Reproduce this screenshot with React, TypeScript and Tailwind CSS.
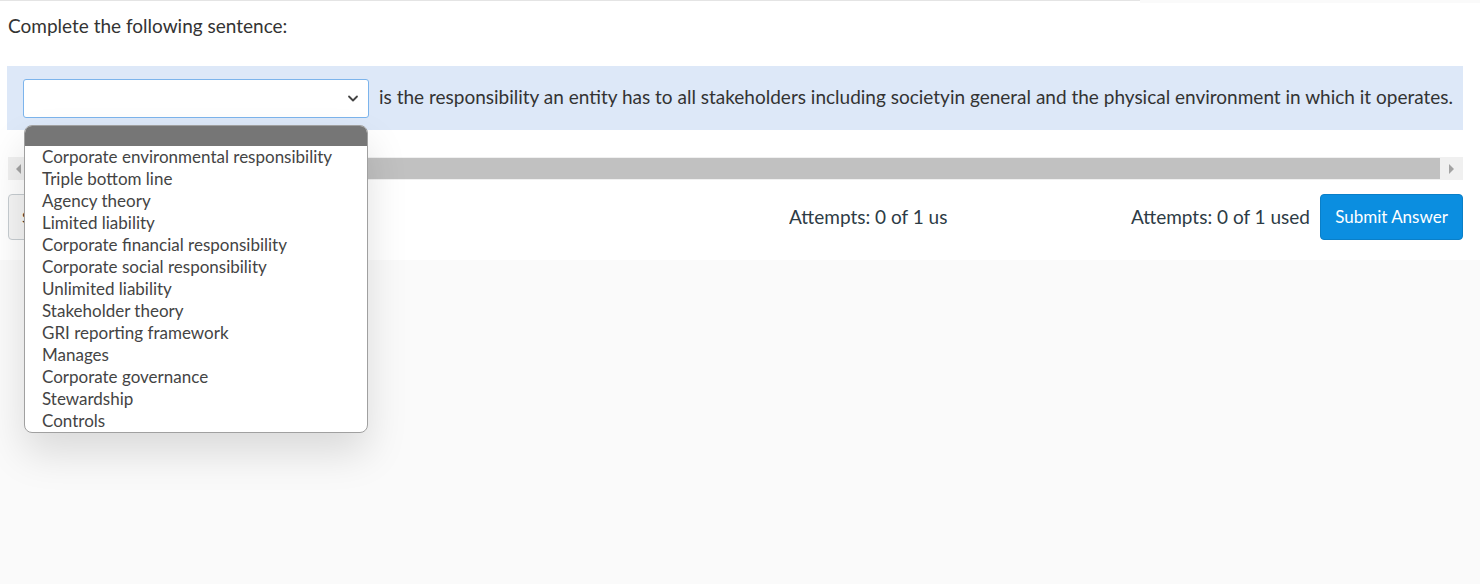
import React from 'react';

const options = [
  'Corporate environmental responsibility',
  'Triple bottom line',
  'Agency theory',
  'Limited liability',
  'Corporate financial responsibility',
  'Corporate social responsibility',
  'Unlimited liability',
  'Stakeholder theory',
  'GRI reporting framework',
  'Manages',
  'Corporate governance',
  'Stewardship',
  'Controls',
];

function Chevron() {
  return (
    <svg width="14" height="14" viewBox="0 0 14 14" fill="none" className="text-[#444]">
      <path d="M3 5.5 7 9.5l4-4" stroke="currentColor" strokeWidth="1.8" strokeLinecap="round" strokeLinejoin="round" />
    </svg>
  );
}

export default function App() {
  return (
    <div className="min-h-[584px] w-full bg-[#fafafa] font-['Lato','Open_Sans',sans-serif] text-[#333]">
      <div className="flex">
        <div className="h-[3px] w-[1140px] border-t border-[#e4e4e4] bg-white" />
        <div className="h-[3px] flex-1 bg-[#fafafa]" />
      </div>
      <div className="bg-white pb-5">
        <div className="px-2 pt-[10px] text-[19px] leading-[26px]">Complete the following sentence:</div>

        <div className="mx-[7px] mt-[27px] mr-[17px] flex h-[64px] items-center bg-[#dde8f8] pl-4">
          <div className="relative">
            <div className="flex h-[39px] w-[346px] items-center justify-end rounded-[3px] border border-[#7cb4ec] bg-white pr-[8px]">
              <Chevron />
            </div>
            <div className="absolute left-[1px] top-[46px] z-10 w-[344px] overflow-hidden rounded-[8px] border border-[#a0a0a0] bg-white shadow-[0_20px_40px_rgba(0,0,0,0.13)]">
              <div className="h-[20px] bg-[#767676]" />
              {options.map((o) => (
                <div key={o} className="h-[22px] pl-[17px] text-[17px] leading-[22px] text-[#444]">
                  {o}
                </div>
              ))}
            </div>
          </div>
          <div className="ml-[10px] whitespace-nowrap pb-[3px] text-[19px] leading-[24px] text-[#333]">
            is the responsibility an entity has to all stakeholders including societyin general and the physical environment in which it operates.
          </div>
        </div>

        <div className="mx-2 mr-[17px] mt-[27px] flex h-[23px] bg-[#f0f0f0]">
          <div className="flex w-[20px] items-center justify-center">
            <div className="h-0 w-0 border-y-[5px] border-r-[5px] border-y-transparent border-r-[#a3a3a3]" />
          </div>
          <div className="my-[1px] flex-1 bg-[#c1c1c1]" />
          <div className="flex w-[23px] items-center justify-center">
            <div className="h-0 w-0 border-y-[5px] border-l-[5px] border-y-transparent border-l-[#a3a3a3]" />
          </div>
        </div>

        <div className="mx-2 mr-[17px] mt-[14px] flex h-[46px] items-center">
          <div className="flex h-[46px] w-[80px] items-center rounded-[4px] border border-[#c7cdd1] bg-[#f5f5f5] pl-[13px] text-[16px]">Save</div>
          <div className="ml-[701px] w-[165px] overflow-hidden whitespace-nowrap text-[19px] text-[#2d3b45]">Attempts: 0 of 1 us</div>
          <div className="ml-auto whitespace-nowrap text-[19px] text-[#2d3b45]">Attempts: 0 of 1 used</div>
          <button className="ml-[10px] h-[46px] w-[143px] rounded-[4px] border border-[#0a7fc8] bg-[#0b8ee0] text-[17px] text-white">Submit Answer</button>
        </div>
      </div>
    </div>
  );
}
